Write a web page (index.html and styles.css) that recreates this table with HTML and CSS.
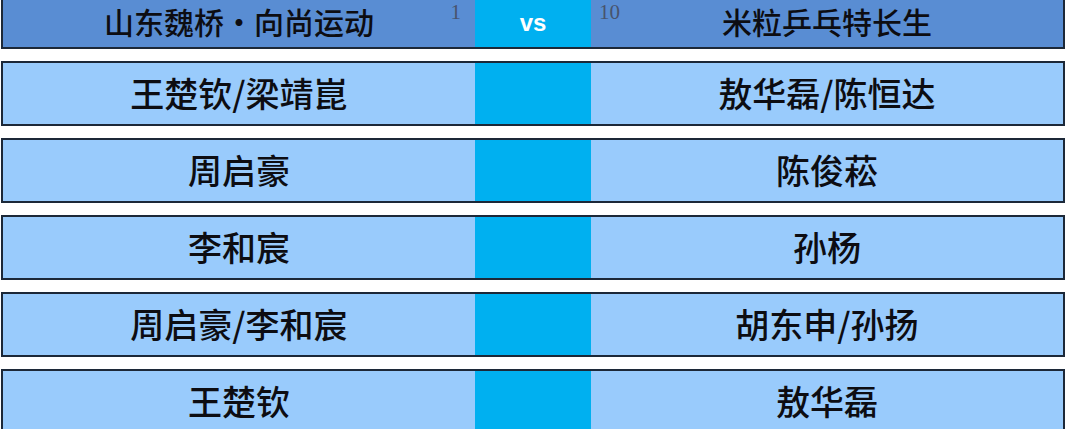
FILE: index.html
```html
<!DOCTYPE html>
<html lang="zh-CN">
<head>
<meta charset="utf-8">
<title>对阵</title>
<link rel="stylesheet" href="styles.css">
</head>
<body>
<div class="board">
  <div class="row head">
    <div class="cell side left"><span class="team">山东魏桥・向尚运动</span><span class="score score-l">1</span></div>
    <div class="cell mid"><span class="vs">vs</span></div>
    <div class="cell side right"><span class="score score-r">10</span><span class="team">米粒乒乓特长生</span></div>
  </div>
  <div class="row match">
    <div class="cell side">王楚钦/梁靖崑</div>
    <div class="cell mid"></div>
    <div class="cell side">敖华磊/陈恒达</div>
  </div>
  <div class="row match">
    <div class="cell side">周启豪</div>
    <div class="cell mid"></div>
    <div class="cell side">陈俊菘</div>
  </div>
  <div class="row match">
    <div class="cell side">李和宸</div>
    <div class="cell mid"></div>
    <div class="cell side">孙杨</div>
  </div>
  <div class="row match">
    <div class="cell side">周启豪/李和宸</div>
    <div class="cell mid"></div>
    <div class="cell side">胡东申/孙扬</div>
  </div>
  <div class="row match">
    <div class="cell side">王楚钦</div>
    <div class="cell mid"></div>
    <div class="cell side">敖华磊</div>
  </div>
</div>
</body>
</html>
```
FILE: styles.css
```css
html, body {
  margin: 0;
  padding: 0;
  background: #ffffff;
}
body {
  font-family: "Noto Sans CJK SC", "Liberation Sans", sans-serif;
  color: #0d0d12;
  overflow: hidden;
}
.board {
  width: 1064px;
  margin-left: 1px;
  display: flex;
  flex-direction: column;
  gap: 12px;
}
.row {
  display: grid;
  grid-template-columns: 472px 116px 1fr;
  box-sizing: border-box;
  border-left: 2px solid #1c2838;
  border-right: 2px solid #1c2838;
  border-bottom: 2px solid #1c2838;
}
.head {
  height: 49px;
  background: #598dd3;
}
.match {
  height: 65px;
  border-top: 2px solid #1c2838;
  background: #99cbfc;
}
.cell {
  display: flex;
  align-items: center;
  justify-content: center;
  position: relative;
  min-width: 0;
}
.mid {
  background: #00b0f0;
}
.match .side {
  font-size: 34px;
  font-weight: 500;
  line-height: 1;
  padding-bottom: 2px;
}
.head .team {
  font-size: 30px;
  font-weight: 500;
  line-height: 1;
  padding-bottom: 5px;
}
.score {
  position: absolute;
  top: 2px;
  font-family: "Liberation Serif", serif;
  font-size: 21px;
  line-height: 1;
  color: #48546e;
}
.score-l {
  right: 14px;
}
.score-r {
  left: 8px;
}
.vs {
  font-family: "Liberation Sans", sans-serif;
  font-weight: 700;
  font-size: 24px;
  color: #ffffff;
  line-height: 1;
  padding-bottom: 2px;
}
```
